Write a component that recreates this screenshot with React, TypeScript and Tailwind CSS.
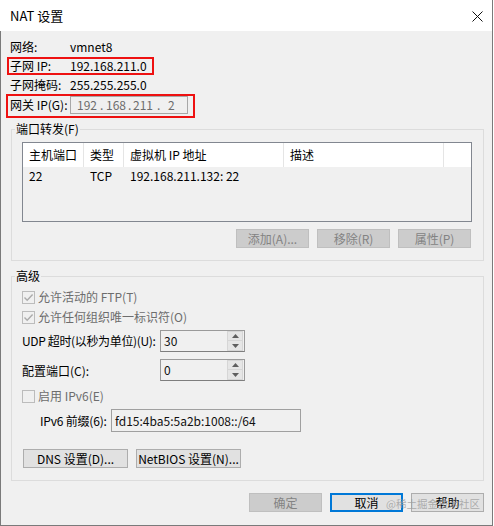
import React from 'react';

const CheckMark = () => (
  <svg width="11" height="11" viewBox="0 0 11 11" fill="none">
    <path d="M1.5 5.5L4.2 8.2L9.6 2.6" stroke="#ababab" strokeWidth="1.4" />
  </svg>
);

const CheckBox: React.FC<{ checked?: boolean; label: string }> = ({ checked, label }) => (
  <div className="flex items-center h-4 ml-[10px]">
    <span className="w-[13px] h-[13px] border border-[#bcbcbc] bg-[#f0f0f0] flex items-center justify-center">
      {checked && <CheckMark />}
    </span>
    <span className="ml-[3px] text-[#6d6d6d] whitespace-nowrap">{label}</span>
  </div>
);

const Arrow = ({ up }: { up?: boolean }) => (
  <svg width="7" height="4" viewBox="0 0 7 4">
    <path d={up ? 'M0 4L3.5 0L7 4Z' : 'M0 0L3.5 4L7 0Z'} fill="#5f5f5f" />
  </svg>
);

const SpinBox = ({ value }: { value: string }) => (
  <div className="w-[85px] h-[22px] shrink-0 border border-[#9a9a9a] border-b-[#7e7e7e] bg-[#f0f0f0] flex">
    <span className="flex-1 pl-[3px] flex items-center text-[#111]">{value}</span>
    <div className="flex flex-col w-[16px] mr-[1px]">
      <span className="h-[10px] border border-[#d6d6d6] bg-[#e6e6e6] flex items-center justify-center">
        <Arrow up />
      </span>
      <span className="h-[10px] border border-[#d6d6d6] border-t-0 bg-[#e6e6e6] flex items-center justify-center">
        <Arrow />
      </span>
    </div>
  </div>
);

const Btn: React.FC<{ label: string; disabled?: boolean; width: string; focused?: boolean }> = ({
  label,
  disabled,
  width,
  focused,
}) => (
  <div
    className={`${width} h-[19px] flex items-center justify-center whitespace-nowrap ${
      disabled
        ? 'bg-[#cccccc] border border-[#bfbfbf] text-[#838383]'
        : focused
          ? 'bg-[#e1e1e1] border-2 border-[#0078d7] text-black'
          : 'bg-[#e1e1e1] border border-[#adadad] text-black'
    }`}
  >
    {label}
  </div>
);

const columns = [
  { title: '主机端口', w: 'w-[61px]', value: '22' },
  { title: '类型', w: 'w-[40px]', value: 'TCP' },
  { title: '虚拟机 IP 地址', w: 'w-[160px]', value: '192.168.211.132: 22' },
  { title: '描述', w: 'w-[160px]', value: '' },
];

export default function App() {
  return (
    <div className="w-[494px] h-[526px] bg-white font-['Noto_Sans_CJK_SC','Noto_Sans',sans-serif] text-[12px] leading-4 text-black">
      <div className="relative w-[493px] h-[526px] border-r border-[#7a7a7a] flex flex-col">
        {/* title bar */}
        <div className="h-[31px] bg-white flex items-center justify-between pl-[10px] pr-[9px] shrink-0">
          <span className="text-[13px]">NAT 设置</span>
          <svg width="11" height="11" viewBox="0 0 11 11" className="mt-[1px]">
            <path d="M0.5 0.5L10.5 10.5M10.5 0.5L0.5 10.5" stroke="#111" strokeWidth="1" />
          </svg>
        </div>

        {/* body */}
        <div className="flex-1 bg-[#f0f0f0] border-l border-b border-[#7a7a7a] pl-[9px] pt-[6px]">
          <div className="h-[19px] flex items-center">
            <span className="w-[60px]">网络:</span>
            <span>vmnet8</span>
          </div>
          <div className="relative h-[19px] flex items-center">
            <span className="w-[60px]">子网 IP:</span>
            <span>192.168.211.0</span>
            <span className="absolute left-[-3px] top-[1px] w-[147px] h-[18px] border-2 border-[#ee1111]" />
          </div>
          <div className="h-[19px] flex items-center">
            <span className="w-[60px]">子网掩码:</span>
            <span>255.255.255.0</span>
          </div>
          <div className="relative h-[22px] flex items-center">
            <span className="w-[60px]">网关 IP(G):</span>
            <span className="w-[118px] h-[18px] border border-[#a8a8a8] bg-[#f0f0f0] text-[#6d6d6d] pl-[6px] flex items-center">
              <span className="w-[23px]">192</span>
              <span className="w-[6px]">.</span>
              <span className="w-[22px]">168</span>
              <span className="w-[5px]">.</span>
              <span className="w-[24px]">211</span>
              <span className="w-[11px]">.</span>
              <span>2</span>
            </span>
            <span className="absolute left-[-4px] top-0 w-[189px] h-[24px] border-2 border-[#ee1111]" />
          </div>

          {/* port forwarding */}
          <fieldset className="mt-[5px] ml-[1px] w-[473px] border border-[#dcdcdc] p-0 pb-[12px]">
            <legend className="ml-[3px] px-[1px]">端口转发(F)</legend>
            <div className="mt-[5px] ml-[10px] w-[450px] h-[80px] border border-[#828790] bg-[#f0f0f0]">
              <div className="h-[24px] bg-white flex">
                {columns.map((c) => (
                  <div key={c.title} className={`${c.w} h-full border-r border-[#e5e5e5] pl-[6px] flex items-center`}>
                    {c.title}
                  </div>
                ))}
              </div>
              <div className="h-[18px] flex items-center">
                {columns.map((c) => (
                  <div key={c.title} className={`${c.w} pl-[6px] whitespace-nowrap`}>
                    {c.value}
                  </div>
                ))}
              </div>
            </div>
            <div className="mt-[7px] ml-[10px] w-[449px] flex justify-end gap-[8px]">
              <Btn label="添加(A)..." width="w-[73px]" disabled />
              <Btn label="移除(R)" width="w-[73px]" disabled />
              <Btn label="属性(P)" width="w-[73px]" disabled />
            </div>
          </fieldset>

          {/* advanced */}
          <fieldset className="mt-[7px] ml-[1px] w-[473px] border border-[#dcdcdc] p-0 pb-[12px]">
            <legend className="ml-[3px] px-[1px]">高级</legend>
            <div className="mt-[5px]">
              <CheckBox checked label="允许活动的 FTP(T)" />
            </div>
            <div className="mt-[4px]">
              <CheckBox checked label="允许任何组织唯一标识符(O)" />
            </div>
            <div className="mt-[5px] ml-[10px] flex items-center">
              <span className="w-[138px] shrink-0 whitespace-nowrap tracking-[-0.35px]">UDP 超时(以秒为单位)(U):</span>
              <SpinBox value="30" />
            </div>
            <div className="mt-[7px] ml-[10px] flex items-center">
              <span className="w-[138px] shrink-0 mt-[2px]">配置端口(C):</span>
              <SpinBox value="0" />
            </div>
            <div className="mt-[7px]">
              <CheckBox label="启用 IPv6(E)" />
            </div>
            <div className="mt-[5px] ml-[28px] flex items-center">
              <span className="w-[71px] shrink-0 whitespace-nowrap tracking-[-0.2px]">IPv6 前缀(6):</span>
              <span className="w-[190px] h-[23px] border border-[#a0a0a0] bg-[#f0f0f0] pl-[3px] flex items-center text-[#111]">
                fd15:4ba5:5a2b:1008::/64
              </span>
            </div>
            <div className="mt-[17px] ml-[11px] flex gap-[8px]">
              <Btn label="DNS 设置(D)..." width="w-[105px]" />
              <Btn label="NetBIOS 设置(N)..." width="w-[105px]" />
            </div>
          </fieldset>

          {/* dialog buttons */}
          <div className="mt-[12px] w-[474px] flex justify-end gap-[8px]">
            <Btn label="确定" width="w-[73px]" disabled />
            <Btn label="取消" width="w-[73px]" focused />
            <Btn label="帮助" width="w-[73px]" />
          </div>
        </div>

        <span className="absolute left-[386px] top-[496px] text-[10.5px] text-[#9c9c9c]/80 pointer-events-none">
          @稀土掘金技术社区
        </span>
      </div>
    </div>
  );
}
